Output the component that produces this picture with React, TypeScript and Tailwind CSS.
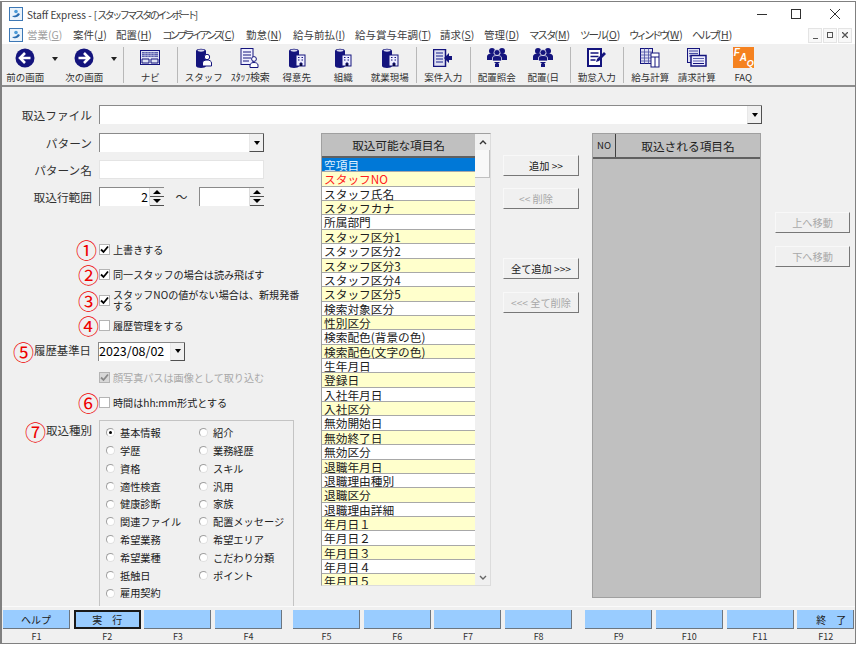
import type { ReactNode } from "react";

const NAVY = "#14147d";
const font = "font-['Noto_Sans_CJK_JP','Noto_Sans',sans-serif]";

const MENUS: [string, string, number][] = [
  ["案件", "J", 43],
  ["配置", "H", 46],
  ["コンプライアンス", "C", 84],
  ["勤怠", "N", 47],
  ["給与前払", "I", 62],
  ["給与賞与年調", "T", 85],
  ["請求", "S", 44],
  ["管理", "D", 45],
  ["マスタ", "M", 51],
  ["ツール", "O", 49],
  ["ウィンドウ", "W", 63],
  ["ヘルプ", "H", 45],
];

const ITEMS = [
  "空項目", "スタッフNO", "スタッフ氏名", "スタッフカナ", "所属部門",
  "スタッフ区分1", "スタッフ区分2", "スタッフ区分3", "スタッフ区分4", "スタッフ区分5",
  "検索対象区分", "性別区分", "検索配色(背景の色)", "検索配色(文字の色)", "生年月日",
  "登録日", "入社年月日", "入社区分", "無効開始日", "無効終了日",
  "無効区分", "退職年月日", "退職理由種別", "退職区分", "退職理由詳細",
  "年月日１", "年月日２", "年月日３", "年月日４", "年月日５",
];

const RADIOS = [
  ["基本情報", "紹介"], ["学歴", "業務経歴"], ["資格", "スキル"], ["適性検査", "汎用"],
  ["健康診断", "家族"], ["関連ファイル", "配置メッセージ"], ["希望業務", "希望エリア"],
  ["希望業種", "こだわり分類"], ["抵触日", "ポイント"], ["雇用契約", ""],
];

function AppIcon() {
  return (
    <svg width="14" height="14" viewBox="0 0 14 14">
      <rect x="0.5" y="0.5" width="13" height="13" fill="#eaf3fb" stroke="#3d78b5" />
      <path d="M3 9c2 2 6 2 8-2l-2-1c-1 2-3 3-6 3z" fill="#2a6db0" />
      <circle cx="7" cy="4.5" r="1.8" fill="#4a9ad8" />
    </svg>
  );
}

function Arrow({ dir }: { dir: "left" | "right" }) {
  return (
    <svg width="20" height="20" viewBox="0 0 20 20">
      <circle cx="10" cy="10" r="9.5" fill={NAVY} />
      <path
        d={dir === "left" ? "M15.5 10H6M10 5l-5 5 5 5" : "M4.5 10H14M10 5l5 5-5 5"}
        stroke="#fff"
        strokeWidth="2.6"
        fill="none"
      />
    </svg>
  );
}

function Keyboard() {
  return (
    <svg width="20" height="15" viewBox="0 0 20 15">
      <rect x="0.5" y="0.5" width="19" height="14" fill="#dfe3f3" stroke={NAVY} />
      <rect x="2" y="2" width="16" height="5" fill="#5a5fae" />
      <path d="M2 3.5h16M2 5.5h16M5 2v5M8 2v5M11 2v5M14 2v5" stroke="#c8cbe8" strokeWidth="0.6" />
      <path d="M2 9h7v4H2zM11 9h7v4h-7z" fill="none" stroke={NAVY} />
    </svg>
  );
}

function Binder({ kind }: { kind: "person" | "building" }) {
  return (
    <svg width="18" height="20" viewBox="0 0 18 20">
      <path d="M1 3c0-3 10-3 10 0v15c0 2.5-10 2.5-10 0z" fill={NAVY} />
      <ellipse cx="6" cy="2.6" rx="3.4" ry="1.1" fill="#d8d8ee" />
      {kind === "person" ? (
        <>
          <circle cx="12" cy="9" r="2.7" fill="#fff" stroke={NAVY} />
          <path d="M7.5 18v-3c0-2 2-3 4.500-3s4.500 1 4.500 3v3z" fill="#fff" stroke={NAVY} />
        </>
      ) : (
        <>
          <rect x="8" y="7" width="9" height="11" fill="#eef" stroke={NAVY} />
          <path d="M10 9.500h1.500M13.500 9.500H15M10 12h1.500M13.500 12H15M12 18v-3h2v3" stroke={NAVY} />
        </>
      )}
    </svg>
  );
}

function DocPerson() {
  return (
    <svg width="20" height="20" viewBox="0 0 20 20">
      <rect x="1" y="0.5" width="12" height="16" fill="#eef" stroke={NAVY} />
      <path d="M3 4h8M3 7h8M3 10h8M3 13h6" stroke={NAVY} />
      <circle cx="14" cy="11" r="2.400" fill="#fff" stroke={NAVY} />
      <path d="M10 19.500v-2.500c0-1.500 2-2.500 4-2.500s4 1 4 2.500v2.500z" fill="#fff" stroke={NAVY} />
    </svg>
  );
}

function CaseIn() {
  return (
    <svg width="20" height="18" viewBox="0 0 20 18">
      <rect x="0.5" y="0.5" width="12" height="17" fill="#dfe0f2" stroke={NAVY} strokeWidth="1.500" />
      <path d="M3 4h7M3 7h7M3 10h7M3 13h7" stroke="#5a5fae" strokeWidth="1.500" />
      <path d="M19 7h-3V4l-5 5 5 5v-3h3z" fill={NAVY} />
    </svg>
  );
}

function People() {
  return (
    <svg width="20" height="22" viewBox="0 0 20 22">
      <circle cx="5" cy="4" r="3" fill={NAVY} />
      <circle cx="15" cy="4" r="3" fill={NAVY} />
      <path d="M0 13V9.500c0-2 2-3 5-3s5 1 5 3 2-3 5-3 5 1 5 3V13z" fill={NAVY} />
      <circle cx="10" cy="5.500" r="3" fill={NAVY} stroke="#fff" strokeWidth="0.700" />
      <path d="M5.500 14v-3c0-2 2-2.500 4.500-2.500s4.500.5 4.500 2.500v3z" fill={NAVY} stroke="#fff" strokeWidth="0.700" />
      <path d="M7 15h6l-3 3z" fill={NAVY} />
      <rect x="8" y="17" width="4" height="3" fill={NAVY} />
    </svg>
  );
}

function NotePen() {
  return (
    <svg width="20" height="19" viewBox="0 0 20 19">
      <rect x="1" y="1" width="13" height="17" fill="#fff" stroke={NAVY} strokeWidth="2" />
      <path d="M3.500 5h8M3.500 8.500h8M3.500 12h5" stroke={NAVY} strokeWidth="1.500" />
      <path d="M9 14l1-3 7-7 2 2-7 7z" fill={NAVY} />
    </svg>
  );
}

function Calc() {
  return (
    <svg width="20" height="20" viewBox="0 0 20 20">
      <rect x="0.5" y="0.5" width="12" height="15" fill="#dfe0f2" stroke={NAVY} />
      <path d="M0.5 4h12M0.5 7h12M0.5 10h12M0.5 13h12M4.500.5v15M8.500.5v15" stroke="#4a4fa5" strokeWidth="0.800" />
      <rect x="11" y="5" width="8" height="14" fill="#fff" stroke={NAVY} />
      <path d="M11 9h8M15 9v10" stroke={NAVY} />
    </svg>
  );
}

function Invoice() {
  return (
    <svg width="20" height="19" viewBox="0 0 20 19">
      <rect x="0.5" y="0.5" width="12" height="14" fill="#dfe0f2" stroke={NAVY} />
      <path d="M2 3h9M2 5.500h9M2 8h3" stroke="#4a4fa5" />
      <rect x="4" y="7.500" width="15" height="10.500" fill="#eef" stroke={NAVY} strokeWidth="1.500" />
      <path d="M6 10.500h11M6 13h11" stroke="#5a5fae" />
      <path d="M6 15.500h11" stroke={NAVY} />
    </svg>
  );
}

function Faq() {
  return (
    <div className="relative w-[21px] h-[21px] bg-[#f58220] text-white italic font-bold text-[8px] leading-none font-['Liberation_Sans',sans-serif]">
      <span className="absolute left-[1px] top-[1px] text-[10px]">F</span>
      <span className="absolute left-[7px] top-[6px] text-[10px]">A</span>
      <span className="absolute left-[14px] top-[12px] text-[9px]">Q</span>
    </div>
  );
}

function Tool({ icon, label, small }: { icon: ReactNode; label: string; small?: boolean }) {
  return (
    <div className="flex flex-col items-center shrink-0 w-[46.500px]">
      <div className="h-[24px] flex items-center justify-center">{icon}</div>
      <div className={`h-[14px] leading-[14px] whitespace-nowrap text-[#303030] ${small ? "text-[10px] tracking-[-0.2px]" : "text-[9.500px]"}`}>
        {label}
      </div>
    </div>
  );
}

function Sep() {
  return <div className="w-px h-[36px] bg-[#b8b8b8] shrink-0 mx-[3px]" />;
}

function Caret() {
  return <div className="w-[12.500px] shrink-0 flex justify-center pb-[12px]"><div className="border-x-[3.500px] border-x-transparent border-t-[4px] border-t-[#222]" /></div>;
}

function Spin({ value, w }: { value?: string; w: string }) {
  return (
    <div className={`${w} h-[19px] bg-white border-t border-l border-t-[#8a8a8a] border-l-[#8a8a8a] flex shrink-0`}>
      <div className="flex-1 text-right pr-[1px] text-[12px] leading-[18px]">{value}</div>
      <div className="w-[15px] flex flex-col border-l border-[#dcdcdc] bg-[#f0f0f0]">
        <div className="flex-1 flex items-center justify-center border-b border-[#505050]"><div className="border-x-[4px] border-x-transparent border-b-[4px] border-b-black" /></div>
        <div className="flex-1 flex items-center justify-center border-b border-[#505050]"><div className="border-x-[4px] border-x-transparent border-t-[4px] border-t-black" /></div>
      </div>
    </div>
  );
}

function DropBtn() {
  return (
    <div className="w-[15px] h-full bg-[#f0f0f0] border-r border-b border-[#505050] border-l border-l-[#e8e8e8] flex items-center justify-center shrink-0">
      <div className="border-x-[3.500px] border-x-transparent border-t-[4px] border-t-black" />
    </div>
  );
}

function Check({ num, checked, disabled, label, h = 25, pr = 0, cls = "" }: { num?: string; checked?: boolean; disabled?: boolean; label: ReactNode; h?: number; pr?: number; cls?: string }) {
  return (
    <div className={`flex items-center ${cls}`} style={{ height: h }}>
      <div className="w-[97px] shrink-0 text-right text-[#ee0000] text-[21px] leading-none" style={{ paddingRight: pr }}>{num}</div>
      <div className={`w-[11px] h-[11px] shrink-0 border border-[#b4b4b4] flex items-center justify-center ${disabled ? "bg-[#d8d8d8]" : "bg-white"}`}>
        {checked && (
          <svg width="9" height="9" viewBox="0 0 9 9">
            <path d="M1 4.500l2.500 2.500L8 1.500" stroke={disabled ? "#8a8a8a" : "#000"} strokeWidth="1.800" fill="none" />
          </svg>
        )}
      </div>
      <div className={`ml-[3px] text-[10.100px] leading-[11px] whitespace-nowrap ${disabled ? "text-[#a8a8a8]" : "text-[#202020]"}`}>{label}</div>
    </div>
  );
}

function Radio({ label, on }: { label: string; on?: boolean }) {
  return (
    <div className="flex items-center w-[93px]">
      <div className="w-[9px] h-[9px] rounded-full bg-white border border-[#a0a0a0] border-b-[#e0e0e0] border-r-[#e0e0e0] flex items-center justify-center shrink-0">
        {on && <div className="w-[3px] h-[3px] rounded-full bg-black" />}
      </div>
      <span className="ml-[5px] text-[10.200px] text-[#202020] whitespace-nowrap">{label}</span>
    </div>
  );
}

function Btn({ children, disabled, cls, w = "w-[76px]" }: { children: ReactNode; disabled?: boolean; cls?: string; w?: string }) {
  return (
    <div className={`${w} h-[21px] bg-[#f0f0f0] border border-[#f8f8f8] border-r-[#777] border-b-[#777] flex items-center justify-center text-[10.200px] whitespace-pre ${disabled ? "text-[#a8a8a8]" : "text-[#202020]"} ${cls ?? ""}`}>
      {children}
    </div>
  );
}

function FKey({ label, name, active, cls = "w-[67px]" }: { label?: string; name: string; active?: boolean; cls?: string }) {
  return (
    <div className={`flex flex-col items-center shrink-0 ${cls}`}>
      <div className={`w-full h-[19px] bg-[#99ccff] flex items-center justify-center text-[10px] text-[#202020] whitespace-pre ${active ? "border-2 border-[#1a1a1a]" : "border-r border-b border-[#6c7680]"}`}>
        {label}
      </div>
      <div className="text-[9px] leading-[12px] mt-[2px] text-[#303030]">{name}</div>
    </div>
  );
}

export default function App() {
  return (
    <div className={`w-[857px] h-[647px] bg-white overflow-hidden pt-px pb-[3px] pr-px ${font}`}>
      <div className="h-full flex flex-col border border-[#808080] border-l-[2px] bg-white">
        {/* title */}
        <div className="h-[24px] flex items-center shrink-0">
          <div className="ml-[7px]"><AppIcon /></div>
          <div className="ml-[4px] text-[10px] text-[#404040] whitespace-nowrap">
            Staff Express - [<span className="tracking-[-2.500px]">スタッフマスタのインポート</span>]
          </div>
          <div className="ml-auto flex items-center text-[#303030]">
            <div className="w-[30px] flex justify-center"><div className="w-[10px] h-px bg-[#303030]" /></div>
            <div className="w-[38px] flex justify-center"><div className="w-[10px] h-[10px] border border-[#303030]" /></div>
            <div className="w-[40px] flex justify-center">
              <svg width="10" height="10" viewBox="0 0 10 10"><path d="M0 0l10 10M10 0L0 10" stroke="#303030" /></svg>
            </div>
          </div>
        </div>
        {/* menu */}
        <div className="h-[18px] flex items-center shrink-0 text-[10.500px] text-[#404040]">
          <div className="ml-[7px] mr-[4px]"><AppIcon /></div>
          <span className="w-[46px] shrink-0 text-[#a0a0a0] whitespace-nowrap">営業(<u>G</u>)</span>
          {MENUS.map(([name, key, w]) => {
            const kana = /^[ァ-ヶー]+$/.test(name);
            return (
              <span key={name} className="shrink-0 whitespace-nowrap" style={{ width: w }}>
                <span className={kana ? (name.length > 3 ? "tracking-[-3px]" : "tracking-[-2px]") : ""}>{name}</span>(<u>{key}</u>)
              </span>
            );
          })}
          <div className="ml-auto mr-[3px] flex gap-px text-[9px] text-[#555]">
            <div className="w-[14px] h-[15px] bg-[#f8f8f8] border border-[#e4e4e4] flex items-end justify-center pb-[3px]"><div className="w-[5px] h-px bg-[#555]" /></div>
            <div className="w-[14px] h-[15px] bg-[#f8f8f8] border border-[#e4e4e4] flex items-center justify-center"><div className="w-[6px] h-[6px] border border-[#555]" /></div>
            <div className="w-[14px] h-[15px] bg-[#f8f8f8] border border-[#e4e4e4] flex items-center justify-center">
              <svg width="6" height="6" viewBox="0 0 6 6"><path d="M0 0l6 6M6 0L0 6" stroke="#555" strokeWidth="1.300" /></svg>
            </div>
          </div>
        </div>
        {/* toolbar */}
        <div className="h-[43px] shrink-0 bg-[#f0f0f0] border-b-[2px] border-[#8c8c8c] flex items-center overflow-hidden">
          <Tool icon={<Arrow dir="left" />} label="前の画面" />
          <Caret />
          <Tool icon={<Arrow dir="right" />} label="次の画面" />
          <Caret />
          <Sep />
          <Tool icon={<Keyboard />} label="ナビ" />
          <Sep />
          <Tool icon={<Binder kind="person" />} label="スタッフ" />
          <Tool icon={<DocPerson />} label="ｽﾀｯﾌ検索" small />
          <Tool icon={<Binder kind="building" />} label="得意先" />
          <Tool icon={<Binder kind="building" />} label="組織" />
          <Tool icon={<Binder kind="building" />} label="就業現場" />
          <Sep />
          <Tool icon={<CaseIn />} label="案件入力" />
          <Sep />
          <Tool icon={<People />} label="配置照会" />
          <Tool icon={<People />} label="配置(日" />
          <Sep />
          <Tool icon={<NotePen />} label="勤怠入力" />
          <Sep />
          <Tool icon={<Calc />} label="給与計算" />
          <Tool icon={<Invoice />} label="請求計算" />
          <Tool icon={<Faq />} label="FAQ" />
        </div>
        {/* body */}
        <div className="flex-1 min-h-0 bg-[#f0f0f0] overflow-hidden border-b border-[#fafafa]">
          <div className="flex items-center h-[19px] mt-[18px]">
            <div className="w-[90px] text-right text-[11.700px] text-[#303030] shrink-0">取込ファイル</div>
            <div className="ml-[7px] w-[663px] h-full bg-white border-t border-l border-[#8a8a8a] flex justify-end">
              <DropBtn />
            </div>
          </div>
          <div className="flex items-start mt-[9px]">
            {/* left */}
            <div className="w-[319px] shrink-0">
              <div className="flex items-center h-[19px]">
                <div className="w-[90px] text-right text-[11.700px] text-[#303030] shrink-0">パターン</div>
                <div className="ml-[7px] w-[165px] h-full bg-white border-t border-l border-[#8a8a8a] flex justify-end"><DropBtn /></div>
              </div>
              <div className="flex items-center h-[19px] mt-[8px]">
                <div className="w-[90px] text-right text-[11.700px] text-[#303030] shrink-0">パターン名</div>
                <div className="ml-[7px] w-[165px] h-full bg-white border border-[#e4e4e4]" />
              </div>
              <div className="flex items-center h-[19px] mt-[8px]">
                <div className="w-[90px] text-right text-[11.700px] text-[#303030] shrink-0">取込行範囲</div>
                <div className="ml-[7px] flex items-center">
                  <Spin value="2" w="w-[65px]" />
                  <span className="w-[35px] text-center text-[12px] text-[#303030]">～</span>
                  <Spin w="w-[65px]" />
                </div>
              </div>
              <div className="mt-[31px]">
                <Check num="①" checked pr={2} label="上書きする" />
                <Check num="②" checked label="同一スタッフの場合は読み飛ばす" />
                <Check num="③" checked h={26} label={<>スタッフNOの値がない場合は、新規発番<br />する</>} />
                <Check num="④" label="履歴管理をする" />
                <div className="flex items-center h-[26px]">
                  <div className="w-[11px] shrink-0" />
                  <div className="text-[#ee0000] text-[21px] leading-none">⑤</div>
                  <div className="w-[60px] text-[11.400px] text-[#303030] whitespace-nowrap">履歴基準日</div>
                  <div className="ml-[4px] w-[87px] h-[19px] bg-white border-t border-l border-[#8a8a8a] flex items-center">
                    <span className="flex-1 text-[12.500px] leading-none whitespace-nowrap">2023/08/02</span>
                    <DropBtn />
                  </div>
                </div>
                <Check disabled checked cls="mt-px" label="顔写真パスは画像として取り込む" />
                <Check num="⑥" label="時間はhh:mm形式とする" />
              </div>
              <div className="flex items-start mt-[5px]">
                <div className="w-[95px] shrink-0 flex items-center h-[22px] pl-[23px]">
                  <span className="text-[#ee0000] text-[21px] leading-none">⑦</span>
                  <span className="text-[11.500px] text-[#303030] whitespace-nowrap">取込種別</span>
                </div>
                <div className="ml-[2px] w-[195px] h-[190px] border border-[#c4c4c4] pl-[6px] pt-[3px]">
                  {RADIOS.map(([a, b], i) => (
                    <div key={a} className="flex h-[17.800px] items-center">
                      <Radio label={a} on={i === 0} />
                      {b && <Radio label={b} />}
                    </div>
                  ))}
                </div>
              </div>
            </div>
            {/* available items */}
            <div className="w-[170px] h-[453px] shrink-0 border border-[#a0a0a0] border-r-[#dcdcdc] border-b-[#dcdcdc] flex overflow-hidden">
              <div className="w-[153px] shrink-0 overflow-hidden">
                <div className="h-[24px] bg-[#c0c0c0] border-b-[2px] border-[#606060] flex items-center justify-center text-[11.700px] text-[#202020] tracking-[-0.100px]">
                  取込可能な項目名
                </div>
                {ITEMS.map((t, i) => (
                  <div
                    key={t}
                    className={`h-[14.360px] leading-[13px] text-[11.700px] pl-[2px] border-b border-[#a8a8a8] whitespace-nowrap ${
                      i === 0 ? "bg-[#0078d7] text-[#dff0ff]" : i % 2 ? "bg-[#ffffcc]" : "bg-white"
                    } ${i === 1 ? "text-[#ff2020]" : i === 0 ? "" : "text-[#202020]"}`}
                  >
                    {t}
                  </div>
                ))}
              </div>
              <div className="flex-1 bg-[#f0f0f0] flex flex-col items-center">
                <div className="h-[16px] flex items-center">
                  <svg width="8" height="5" viewBox="0 0 8 5"><path d="M1 4l3-3 3 3" stroke="#333" strokeWidth="1.400" fill="none" /></svg>
                </div>
                <div className="w-full h-[28px] bg-[#f8f8f8] border-b border-r border-[#c0c0c0]" />
                <div className="flex-1" />
                <div className="h-[16px] flex items-center">
                  <svg width="8" height="5" viewBox="0 0 8 5"><path d="M1 1l3 3 3-3" stroke="#666" strokeWidth="1.400" fill="none" /></svg>
                </div>
              </div>
            </div>
            {/* move buttons */}
            <div className="ml-[12px] shrink-0 pt-[22px]">
              <Btn cls="pl-[10px]">追加 &gt;&gt;</Btn>
              <Btn disabled cls="mt-[12px] pr-[10px]">&lt;&lt; 削除</Btn>
              <Btn cls="mt-[49px]">全て追加 &gt;&gt;&gt;</Btn>
              <Btn disabled cls="mt-[13px]">&lt;&lt;&lt; 全て削除</Btn>
            </div>
            {/* selected items */}
            <div className="ml-[13px] w-[169px] h-[465px] shrink-0 bg-[#c0c0c0] border border-[#a0a0a0]">
              <div className="h-[25px] flex border-b-[2px] border-[#606060]">
                <div className="w-[23px] border-r border-[#404040] flex items-center justify-center text-[9.500px] text-[#202020]">NO</div>
                <div className="flex-1 flex items-center justify-center text-[11.700px] text-[#202020]">取込される項目名</div>
              </div>
            </div>
            {/* order buttons */}
            <div className="ml-[14px] shrink-0 pt-[79px]">
              <Btn disabled w="w-[75px]">上へ移動</Btn>
              <Btn disabled w="w-[75px]" cls="mt-[13px]">下へ移動</Btn>
            </div>
          </div>
        </div>
        {/* function keys */}
        <div className="h-[36px] shrink-0 bg-[#f0f0f0] flex pl-[1px] pt-[3px] overflow-hidden">
          <div className="flex gap-[3.700px]">
            <FKey label="ヘルプ" name="F1" />
            <FKey label="実　行" name="F2" active />
            <FKey name="F3" />
            <FKey name="F4" />
          </div>
          <div className="flex gap-[3.700px] ml-[11px]">
            <FKey name="F5" />
            <FKey name="F6" />
            <FKey name="F7" />
            <FKey name="F8" />
          </div>
          <div className="flex gap-[3.700px] ml-[13px]">
            <FKey name="F9" />
            <FKey name="F10" />
            <FKey name="F11" />
            <FKey label=" 　終　了" name="F12" cls="w-[57px]" />
          </div>
        </div>
      </div>
    </div>
  );
}
